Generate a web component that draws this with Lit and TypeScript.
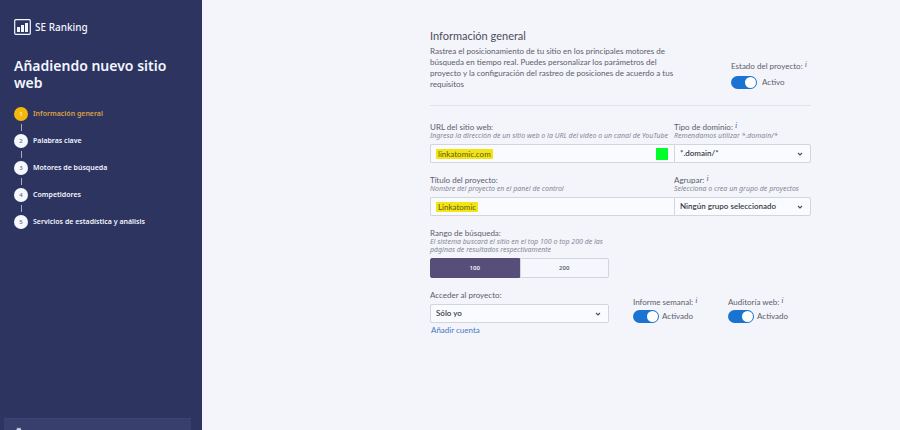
import { LitElement, html, css, svg } from "lit";
import { customElement, property, state } from "lit/decorators.js";
import { classMap } from "lit/directives/class-map.js";

const chevron = svg`<path d="M1 1 L3 3 L5 1" fill="none" stroke="#4b4e5a" stroke-width="1.1" />`;

@customElement("toggle-field")
class ToggleField extends LitElement {
  @property() label = "";
  @property() status = "";
  @property({ type: Boolean }) wide = false;

  static styles = css`
    :host { display: block; font-size: 8px; color: #5b5e6a; white-space: nowrap; }
    .label { display: block; line-height: 10px; height: 10px; margin-bottom: 3px; }
    .info { font: italic 8px/6px "Liberation Serif", serif; vertical-align: 2px; }
    .row { display: flex; align-items: center; gap: 3px; line-height: 13px; }
    .wide .label { margin-bottom: 5px; }
    .wide .row { gap: 5px; }
    input {
      appearance: none; margin: 0; flex: none; width: 26px; height: 13px;
      border-radius: 7px; background: #c4c8d4; display: flex; padding: 1px;
      box-sizing: border-box;
    }
    input::before { content: ""; width: 11px; height: 11px; border-radius: 50%; background: #fff; }
    input:checked { background: #1a73d0; justify-content: flex-end; }
  `;

  render() {
    return html`<div class=${classMap({ wide: this.wide })}>
      <label class="label" for="t">${this.label} <span class="info">i</span></label>
      <div class="row"><input id="t" type="checkbox" role="switch" checked /><span>${this.status}</span></div>
    </div>`;
  }
}

@customElement("app-root")
class AppRoot extends LitElement {
  @state() range = 100;

  static styles = css`
    :host {
      display: flex; min-height: 100vh; background: #f4f4fb; color: #5b5e6a;
      font: 8px/10px Lato, sans-serif;
    }
    * { box-sizing: border-box; }
    .side {
      flex: none; width: 202px; background: #2d345f; color: #f3f6ff;
      display: flex; flex-direction: column; padding: 19px 11px 0 14px;
    }
    .brand { display: flex; align-items: center; gap: 4px; font: 500 10px/16px "Noto Sans", sans-serif; }
    .brand svg { width: 17px; height: 16px; }
    .side h1 { margin: 22px 0 16px; font: 600 14px/17px "Noto Sans", sans-serif; }
    .steps { list-style: none; margin: 0; padding: 0; }
    .step { display: flex; align-items: center; gap: 5px; font: 600 7px/14px "Noto Sans", sans-serif; }
    .step + .step { margin-top: 13px; position: relative; }
    .step + .step::before {
      content: ""; position: absolute; left: 7px; top: -10px; width: 1px; height: 7px; background: #a5aac8;
    }
    .num {
      width: 14px; height: 14px; border-radius: 50%; background: #f5f8ff; color: #70758a;
      text-align: center; font-size: 6px; font-weight: 600;
    }
    .current { color: #dca045; }
    .current .num { background: #f4b80c; color: #fff3cf; }
    .dock {
      margin: auto 0 0 -10px; height: 12px; background: #383f6d; border-top: 1px solid #3c4472;
      padding: 8px 0 0 11px; overflow: hidden;
    }
    .dock svg { display: block; width: 8px; height: 8px; }

    .main { flex: 1; min-width: 0; padding: 29px 89px 24px 228px; }
    .intro { display: flex; justify-content: space-between; align-items: flex-end; padding-bottom: 16px; border-bottom: 1px solid #e3e3ec; }
    .text { width: 244px; }
    h2 { margin: 0 0 3px; font: 400 11px/14px Lato, sans-serif; color: #4b4e5a; }
    p { margin: 0 0 -1px; line-height: 11px; }
    .state { width: 80px; }
    .form { padding-top: 16px; display: flex; flex-direction: column; gap: 12px; }
    .pair { display: grid; grid-template-columns: 244fr 137fr; }
    .field { min-width: 0; }
    .field label, .caption { display: block; line-height: 10px; height: 10px; white-space: nowrap; }
    .info { font: italic 8px/6px "Liberation Serif", serif; vertical-align: 2px; }
    .hint { font: italic 7px/8px "Noto Sans", sans-serif; color: #858896; white-space: nowrap; }
    .box {
      margin-top: 4px; height: 19px; display: flex; align-items: center; justify-content: space-between;
      background: #fafbfe; border: 1px solid #d2d4de; border-radius: 2px; padding: 0 6px 0 5px; position: relative;
    }
    .left { border-right: 0; border-radius: 2px 0 0 2px; }
    .right { border-radius: 0 2px 2px 0; }
    .box input {
      field-sizing: content; min-width: 0; height: 10px; border: 0; outline: 0; padding: 0 2px;
      background: #f3e513; color: #5c5a1e; font: 8px/10px Lato, sans-serif; border-radius: 1px;
    }
    .swatch { width: 12px; height: 12px; background: #00ff2a; }
    .box.pick { padding: 0; }
    select {
      appearance: none; width: 100%; height: 17px; border: 0; outline: 0; background: none;
      padding: 0 20px 0 5px; color: #3a3c46; font: 600 8px/17px Lato, sans-serif;
    }
    .pick svg { position: absolute; right: 7px; top: 7px; width: 6px; height: 4px; pointer-events: none; }
    .narrow { width: 179px; }
    .segment { margin-top: 4px; display: flex; height: 20px; }
    .segment button {
      flex: 1; border: 1px solid #d2d4de; background: #f5f7fc; color: #555866; padding: 0;
      font: 600 6px/18px "Open Sans", sans-serif; border-radius: 0 2px 2px 0;
    }
    .segment button:first-child { border-radius: 2px 0 0 2px; }
    .segment .on { background: #574f7a; border-color: #574f7a; color: #fff; }
    .access { display: grid; grid-template-columns: 179px 71px 1fr; column-gap: 24px; align-items: end; }
    a { display: inline-block; margin: 2px 0 0 1px; color: #4678bf; text-decoration: none; }
  `;

  select(id: string, value: string, cls: string) {
    return html`<div class="box pick ${cls}">
      <select id=${id}><option>${value}</option></select>
      <svg viewBox="0 0 6 4" aria-hidden="true">${chevron}</svg>
    </div>`;
  }

  render() {
    const steps = ["Información general", "Palabras clave", "Motores de búsqueda", "Competidores", "Servicios de estadística y análisis"];
    return html`
      <aside class="side">
        <div class="brand">
          <svg viewBox="0 0 17 16" aria-hidden="true">
            <rect x=".7" y=".7" width="15.6" height="14.6" rx="1" fill="none" stroke="#f3f6ff" stroke-width="1.2" />
            <path d="M3 8h3v5H3zM7 6h3v7H7zM11 4h3v9h-3z" fill="#f3f6ff" />
          </svg>
          <span>SE Ranking</span>
        </div>
        <h1>Añadiendo nuevo sitio web</h1>
        <ol class="steps">
          ${steps.map((s, i) => html`<li class=${classMap({ step: true, current: i === 0 })}><span class="num">${i + 1}</span>${s}</li>`)}
        </ol>
        <div class="dock">
          <svg viewBox="0 0 8 8" aria-hidden="true"><path d="M1 3.5 L2.6 .5 L4 1.4 L5.2 .5 L6.5 3.5Z" fill="#cdd3ee" /></svg>
        </div>
      </aside>
      <main class="main">
        <section class="intro">
          <div class="text">
            <h2>Información general</h2>
            <p>Rastrea el posicionamiento de tu sitio en los principales motores de<br />búsqueda en tiempo real. Puedes personalizar los parámetros del<br />proyecto y la configuración del rastreo de posiciones de acuerdo a tus<br />requisitos</p>
          </div>
          <toggle-field class="state" wide label="Estado del proyecto:" status="Activo"></toggle-field>
        </section>
        <form class="form">
          <div class="pair">
            <div class="field">
              <label for="url">URL del sitio web:</label>
              <div class="hint">Ingresa la dirección de un sitio web o la URL del vídeo o un canal de YouTube</div>
              <div class="box left"><input id="url" .value=${"linkatomic.com"} /><span class="swatch"></span></div>
            </div>
            <div class="field">
              <label for="domain">Tipo de dominio: <span class="info">i</span></label>
              <div class="hint">Remendamos utilizar *.domain/*</div>
              ${this.select("domain", "*.domain/*", "right")}
            </div>
          </div>
          <div class="pair">
            <div class="field">
              <label for="title">Título del proyecto:</label>
              <div class="hint">Nombre del proyecto en el panel de control</div>
              <div class="box left"><input id="title" .value=${"Linkatomic"} /></div>
            </div>
            <div class="field">
              <label for="group">Agrupar: <span class="info">i</span></label>
              <div class="hint">Selecciona o crea un grupo de proyectos</div>
              ${this.select("group", "Ningún grupo seleccionado", "right")}
            </div>
          </div>
          <div class="narrow">
            <div class="caption" id="range">Rango de búsqueda:</div>
            <div class="hint">El sistema buscará el sitio en el top 100 o top 200 de las<br />páginas de resultados respectivamente</div>
            <div class="segment" role="group" aria-labelledby="range">
              ${[100, 200].map((n) => html`<button type="button" class=${classMap({ on: this.range === n })} @click=${() => (this.range = n)}>${n}</button>`)}
            </div>
          </div>
          <div>
            <div class="access">
              <div class="field">
                <label for="access">Acceder al proyecto:</label>
                ${this.select("access", "Sólo yo", "")}
              </div>
              <toggle-field label="Informe semanal:" status="Activado"></toggle-field>
              <toggle-field label="Auditoría web:" status="Activado"></toggle-field>
            </div>
            <a href="#">Añadir cuenta</a>
          </div>
        </form>
      </main>
    `;
  }
}
